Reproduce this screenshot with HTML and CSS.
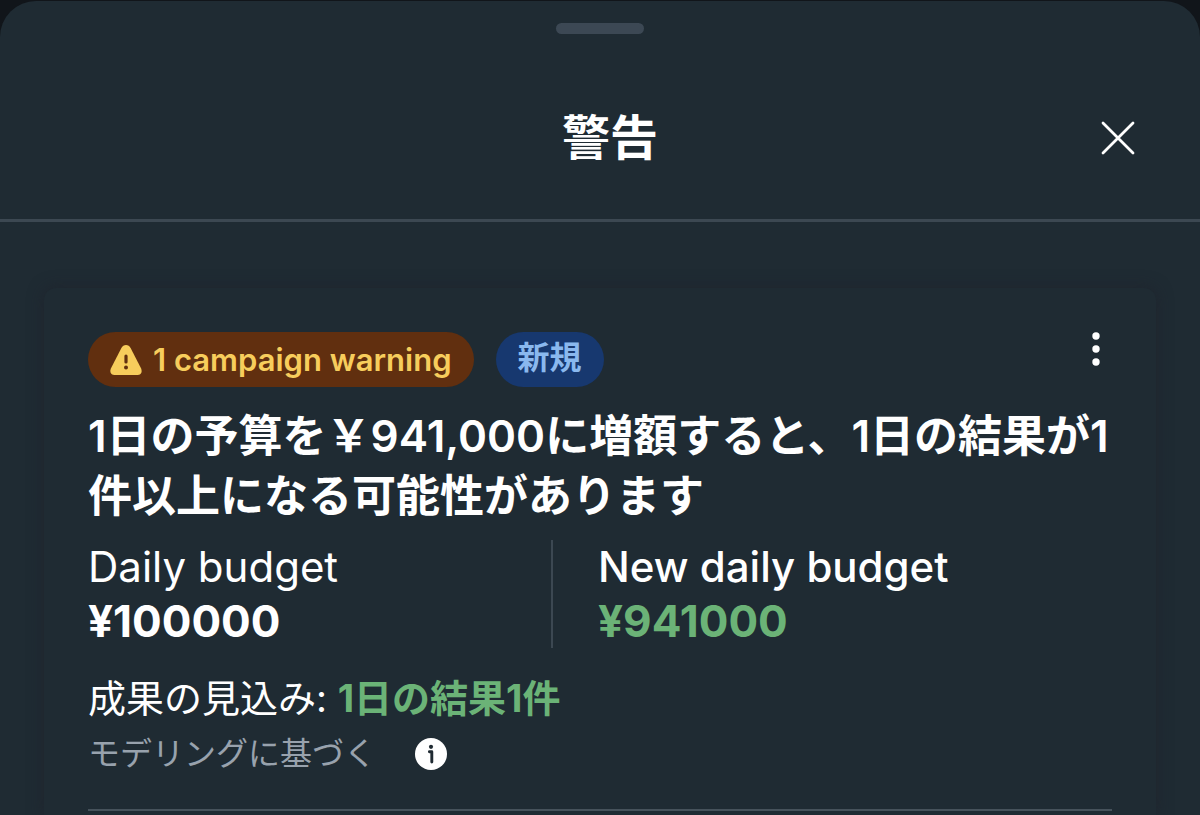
FILE: index.html
```html
<!DOCTYPE html>
<html lang="ja">
<head>
  <meta charset="UTF-8">
  <meta name="viewport" content="width=device-width, initial-scale=1.0">
  <title>警告</title>
  <link rel="stylesheet" href="styles.css">
</head>
<body>
  <main class="sheet">
    <header class="sheet-header">
      <div class="drag-handle"></div>
      <div class="title-row">
        <h1>警告</h1>
        <button class="icon-btn" type="button" aria-label="閉じる">
          <svg width="34" height="34" viewBox="0 0 34 34" fill="none" stroke="currentColor" stroke-width="2.8" stroke-linecap="round">
            <path d="M2 2 L32 32 M32 2 L2 32"/>
          </svg>
        </button>
      </div>
    </header>

    <div class="sheet-body">
      <article class="card">
        <div class="card-top">
          <span class="badge badge-warning">
            <svg width="32" height="32" viewBox="0 0 32 32">
              <path d="M16 1 C18 1 19.6 2.1 20.6 4 L31 24.2 C32.7 27.7 31 31 27.4 31 H4.6 C1 31 -0.7 27.7 1 24.2 L11.4 4 C12.4 2.1 14 1 16 1 Z" fill="currentColor"/>
              <path d="M16 12 V18" stroke="#612f0f" stroke-width="3.2" stroke-linecap="round"/>
              <circle cx="16" cy="23.6" r="2" fill="#612f0f"/>
            </svg>
            1 campaign warning
          </span>
          <span class="badge badge-new">新規</span>
          <button class="icon-btn menu-btn" type="button" aria-label="メニュー">
            <svg width="32" height="34" viewBox="0 0 32 34" fill="currentColor">
              <circle cx="16" cy="4" r="3.7"/>
              <circle cx="16" cy="17" r="3.7"/>
              <circle cx="16" cy="30" r="3.7"/>
            </svg>
          </button>
        </div>

        <h2>1日の予算を￥941,000に増額すると、1日の結果が1件以上になる可能性があります</h2>

        <div class="budgets">
          <div class="budget">
            <div class="label">Daily budget</div>
            <div class="amount">¥100000</div>
          </div>
          <div class="budget budget-new">
            <div class="label label-new">New daily budget</div>
            <div class="amount positive">¥941000</div>
          </div>
        </div>

        <p class="estimate">成果の見込み: <strong class="positive">1日の結果1件</strong></p>
        <div class="basis">
          <span>モデリングに基づく</span>
          <button class="icon-btn" type="button" aria-label="詳細">
            <svg width="32" height="32" viewBox="0 0 32 32">
              <circle cx="16" cy="16" r="16" fill="currentColor"/>
              <circle cx="16" cy="8.8" r="2.1" fill="#1f2a32"/>
              <path d="M14.4 13.8 H16.8 V24" fill="none" stroke="#1f2a32" stroke-width="2.9" stroke-linecap="round" stroke-linejoin="round"/>
            </svg>
          </button>
        </div>
        <hr>
      </article>
    </div>
  </main>
</body>
</html>
```
FILE: styles.css
```css
* {
  margin: 0;
  padding: 0;
  box-sizing: border-box;
}

body {
  display: flex;
  flex-direction: column;
  min-height: 100vh;
  padding-top: 1px;
  font-family: Inter, 'Noto Sans CJK JP', sans-serif;
  background-color: #11151a;
  color: #fff;
}

.sheet {
  display: flex;
  flex-direction: column;
  flex: 1;
  background-color: #1f2b33;
  border-radius: 36px 36px 0 0;
}

/* Header */
.sheet-header {
  padding-top: 22px;
  border-bottom: 3px solid #3c4852;
}

.drag-handle {
  width: 88px;
  height: 11px;
  margin: 0 auto;
  border-radius: 6px;
  background-color: #3c4854;
}

.title-row {
  display: grid;
  grid-template-columns: 1fr auto 1fr;
  align-items: center;
  padding: 69px 65px 46px 85px;
}

h1 {
  grid-column: 2;
  font-size: 48px;
  line-height: 70px;
  font-weight: 700;
}

.title-row .icon-btn {
  justify-self: end;
}

.icon-btn {
  display: flex;
  border: none;
  background: none;
  color: #fff;
  cursor: pointer;
}

/* Card */
.sheet-body {
  display: flex;
  flex: 1;
  padding: 66px 44px 0;
}

.card {
  flex: 1;
  padding: 44px 44px 0;
  border-radius: 12px 12px 0 0;
  background-color: #1f2b33;
  box-shadow: 0 0 16px rgba(32, 32, 42, 0.6);
}

.card-top {
  display: flex;
  align-items: flex-start;
  gap: 22px;
}

.badge {
  display: flex;
  align-items: center;
  gap: 11px;
  height: 55px;
  padding: 0 22px;
  border-radius: 28px;
  font-weight: 600;
  white-space: nowrap;
}

.badge-warning {
  font-size: 31px;
  background-color: #612f0f;
  color: #f7cd5c;
}

.badge-new {
  font-size: 32px;
  line-height: 44px;
  padding-bottom: 4px;
  background-color: #17386f;
  color: #8ab8ee;
}

.menu-btn {
  margin-left: auto;
}

h2 {
  margin-top: 19px;
  font-size: 44px;
  line-height: 60px;
  font-weight: 600;
}

.budgets {
  display: grid;
  grid-template-columns: 463px 1fr;
  margin-top: 14px;
  line-height: 54px;
}

.budget-new {
  padding-left: 45px;
  border-left: 2px solid #3c4852;
}

.label {
  font-size: 42px;
}

.label-new {
  font-weight: 500;
}

.amount {
  font-size: 44px;
  font-weight: 700;
}

.positive {
  color: #6bb377;
}

.estimate {
  margin-top: 22px;
  font-size: 38px;
  line-height: 56px;
}

.basis {
  display: flex;
  align-items: center;
  gap: 39px;
  font-size: 32px;
  line-height: 56px;
  color: #98a2ad;
}

hr {
  margin-top: 27px;
  border: none;
  border-top: 2px solid #46525b;
}
```
